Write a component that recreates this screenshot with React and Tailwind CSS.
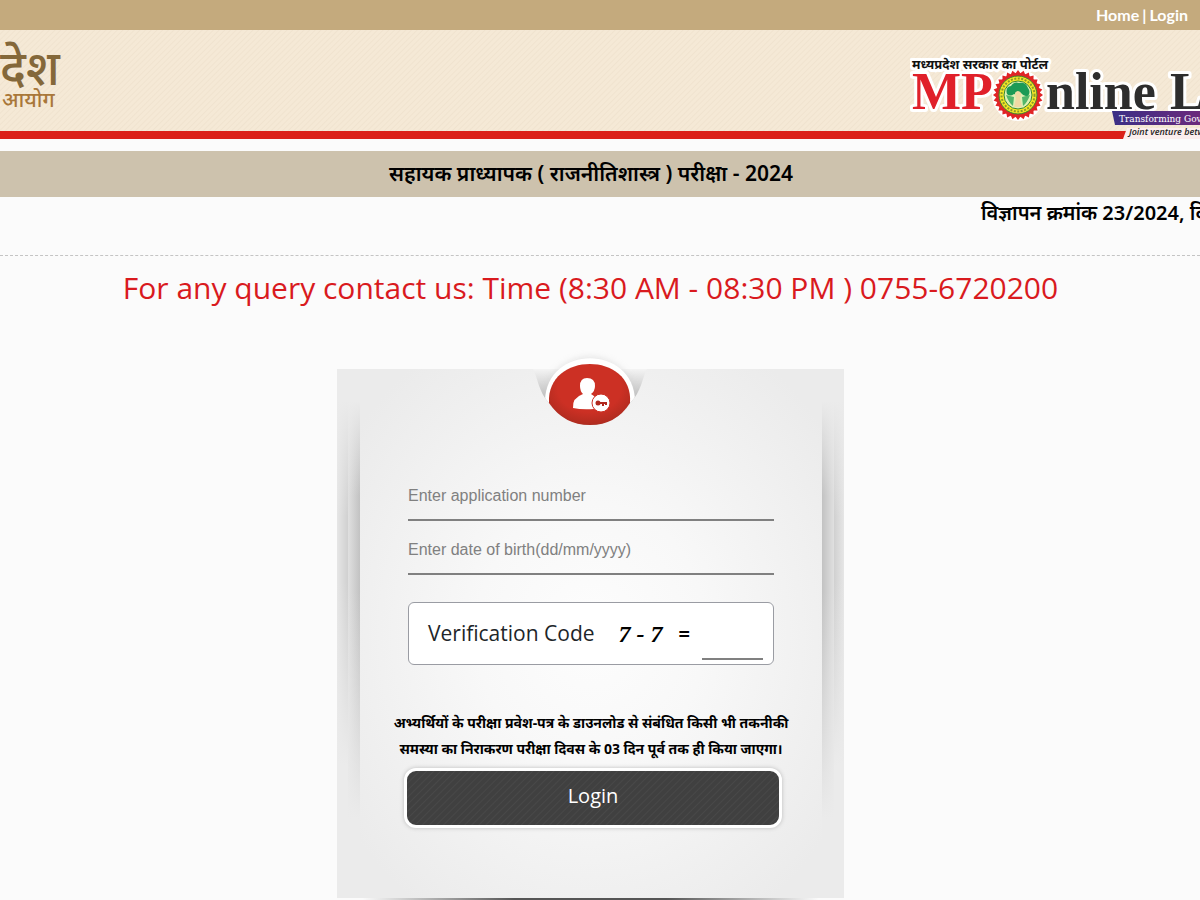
import { useState } from 'react';

const GEAR_TEETH = Array.from({ length: 28 }, (_, i) => (i * 360) / 28);

function TopBar() {
  return (
    <nav className="flex h-[30px] items-center justify-end gap-[3px] bg-[#c4aa7d] pr-3 font-['Lato',sans-serif] text-base font-bold text-white">
      <a href="#home">Home</a>
      <span>|</span>
      <a href="#login">Login</a>
    </nav>
  );
}

function PortalLogo() {
  return (
    <svg viewBox="0 0 290 88" className="h-[88px] w-[290px] shrink-0" role="img" aria-label="MPOnline Limited">
      <defs>
        <linearGradient id="ribbon" x1="0" y1="0" x2="1" y2="0">
          <stop offset="0" stopColor="#3b2f86" />
          <stop offset="1" stopColor="#6b2a7c" />
        </linearGradient>
      </defs>
      {/* Strapline plate that cuts into the red rule */}
      <path d="M217 77 H290 V88 H213 Z" fill="#fbeeee" />
      <g stroke="#ffffff" strokeWidth="6" strokeLinejoin="round" paintOrder="stroke">
        <text x="2" y="58" fontSize="52" fontWeight="700" fill="#e0202a" fontFamily="'Liberation Serif', serif">
          MP
        </text>
        <text x="136" y="58" fontSize="52" fontWeight="700" fill="#2d2d2d" fontFamily="'Liberation Serif', serif">
          nline
        </text>
        <text x="260" y="58" fontSize="52" fontWeight="700" fill="#2d2d2d" fontFamily="'Liberation Serif', serif">
          L
        </text>
        <text x="2" y="18" fontSize="13" fontWeight="700" fill="#111111" fontFamily="'Noto Sans', 'Noto Sans Devanagari', sans-serif">
          मध्यप्रदेश सरकार का पोर्टल
        </text>
      </g>
      <g transform="translate(108 44)">
        <circle r="26" fill="#ffffff" />
        {GEAR_TEETH.map(angle => (
          <path key={angle} d="M-3 -21 L0 -25 L3 -21 Z" fill="#e02426" transform={`rotate(${angle})`} />
        ))}
        <circle r="22" fill="#e02426" />
        <circle r="19" fill="#f5e626" stroke="#37872f" strokeWidth="1" />
        <circle r="16.5" fill="none" stroke="#8a9a2a" strokeWidth="2" strokeDasharray="2 1.5" />
        <circle r="14" fill="#dff0b5" stroke="#37872f" strokeWidth="1" />
        <path d="M-11 -1 Q-13 -8 -7 -9 Q-4 -14 1 -12 Q8 -13 10 -7 Q13 -3 10 1 Q6 2 3 -2 Q0 1 -4 -1 Q-8 2 -11 -1 Z" fill="#1c9a55" />
        <path d="M-12 0 Q-9 8 -5 11 L-4 2 Z M12 0 Q9 8 5 11 L4 2 Z" fill="#52b66b" />
        <path d="M-4 12 L-2 3 Q-5 -3 0 -4 Q5 -3 2 3 L4 12 Z" fill="#f0d9a4" />
      </g>
      <path d="M202 60 H290 V74 H205 Z" fill="url(#ribbon)" />
      <text x="209" y="71" fontSize="9" fill="#ffffff" fontFamily="'DejaVu Serif', serif">
        Transforming Gov
      </text>
      <text x="219" y="84" fontSize="9" fontStyle="italic" fontWeight="600" fill="#222222" fontFamily="'Open Sans', sans-serif">
        Joint venture betw
      </text>
    </svg>
  );
}

function Banner() {
  return (
    <header className="flex h-[109px] items-start justify-between overflow-hidden bg-[#f3e6d2] bg-[linear-gradient(to_top,#db2018_8px,transparent_8px),repeating-linear-gradient(135deg,#f5e9d6_0px,#f5e9d6_2px,#f0e3cf_3px,#f5e9d6_4px)]">
      <div className="pt-[14px] font-['Noto_Sans','Noto_Sans_Devanagari',sans-serif] font-medium">
        <div className="text-5xl leading-[46px] text-[#84683a]">देश</div>
        <div className="pl-[2px] text-[21px] leading-[18px] text-[#a9773a]">आयोग</div>
      </div>
      <div className="self-end">
        <PortalLogo />
      </div>
    </header>
  );
}

function UserKeyBadge() {
  return (
    <svg viewBox="1 0 140 90" className="absolute -top-6 left-1/2 h-[90px] w-[140px] -translate-x-1/2" aria-hidden="true">
      <defs>
        <linearGradient id="notchShade" x1="0" y1="0" x2="0" y2="1">
          <stop offset="0" stopColor="#f4f4f4" />
          <stop offset="0.6" stopColor="#b4b4b4" />
        </linearGradient>
        <radialGradient id="badgeFill" cx="0.5" cy="0.4" r="0.65">
          <stop offset="0.6" stopColor="#cc3024" />
          <stop offset="1" stopColor="#a82a1e" />
        </radialGradient>
        <filter id="badgeBlur">
          <feGaussianBlur stdDeviation="3" />
        </filter>
        <clipPath id="notchClip">
          <path d="M0 0 H140 V24 H127 C122 33 122 46 110 58 Q96 79 70 80 Q44 79 29 58 C18 46 18 33 13 24 H0 Z" />
        </clipPath>
      </defs>
      <path d="M13 24 H127 C122 33 122 46 110 58 Q96 79 70 80 Q44 79 29 58 C18 46 18 33 13 24 Z" fill="url(#notchShade)" />
      <g clipPath="url(#notchClip)">
        <ellipse cx="70" cy="54" rx="45" ry="42" fill="#cccccc" opacity="0.5" filter="url(#badgeBlur)" />
        <path d="M25 56 C26 -1 114 -1 115 56 L110 64 H29 Z" fill="#ffffff" />
      </g>
      <path d="M29 58 C26 6 114 6 110 58 Q96 80 70 80 Q44 80 29 58 Z" fill="url(#badgeFill)" />
      <path d="M53 63 Q52 53 63 49 Q60 46 60 41 Q60 33 67 33 Q75 33 75 41 Q75 46 71 49 Q75 51 76 54 L74 64 Q62 65 53 63 Z" fill="#ffffff" />
      <circle cx="81" cy="58" r="9" fill="#ffffff" stroke="#cc3024" strokeWidth="1" />
      <circle cx="78" cy="58" r="2.5" fill="#b0281e" />
      <path d="M79 57 H87 V60 H85 V59 H84 V61 H82 V59 H79 Z" fill="#b0281e" />
    </svg>
  );
}

function LoginCard() {
  const [form, setForm] = useState({ applicationNo: '', dob: '', code: '' });
  const update = e => setForm({ ...form, [e.target.name]: e.target.value });

  return (
    <section className="mx-auto mt-[57px] w-[507px] max-w-full">
      <div className="relative flex">
        {/* Stacked paper edges, left */}
        <div className="w-[11px] shrink-0 bg-[linear-gradient(to_bottom,#ebebeb_6%,transparent_28%,transparent_40%,#ebebeb_75%),linear-gradient(to_right,#e6e6e6,#d0d0d0)]" />
        <div className="w-3 shrink-0 bg-[linear-gradient(to_bottom,#ebebeb_6%,transparent_24%,transparent_42%,#ebebeb_85%),linear-gradient(to_right,#e0e0e0,#c2c2c2)]" />
        <form
          className="flex min-w-0 flex-1 flex-col bg-[radial-gradient(ellipse_at_center,#fdfdfd_0%,#f8f8f8_35%,#ebebeb_90%)] px-12 pt-[105px] pb-[70px] font-['Open_Sans',sans-serif]"
          onSubmit={e => e.preventDefault()}
        >
          <input
            name="applicationNo"
            aria-label="Application number"
            placeholder="Enter application number"
            value={form.applicationNo}
            onChange={update}
            className="h-[47px] border-b-2 border-[#808080] bg-transparent pb-[2px] font-['Liberation_Sans',sans-serif] text-base text-gray-800 outline-none placeholder:text-[#808080]"
          />
          <input
            name="dob"
            aria-label="Date of birth"
            placeholder="Enter date of birth(dd/mm/yyyy)"
            value={form.dob}
            onChange={update}
            className="mt-[7px] h-[47px] border-b-2 border-[#808080] bg-transparent pb-[2px] font-['Liberation_Sans',sans-serif] text-base text-gray-800 outline-none placeholder:text-[#808080]"
          />
          <div className="mt-[27px] flex h-[63px] items-center rounded-md border border-[#9a9ca3] bg-white pr-[10px] pl-[19px]">
            <label htmlFor="code" className="text-[21px] text-[#212529]">Verification Code</label>
            <span className="ml-auto font-['Liberation_Serif',serif] text-2xl font-bold text-black italic">7 - 7</span>
            <span className="mr-3 ml-4 text-xl font-bold text-black">=</span>
            <input
              id="code"
              name="code"
              value={form.code}
              onChange={update}
              className="mb-1 h-8 w-[61px] self-end border-b-2 border-[#808080] bg-transparent text-center outline-none"
            />
          </div>
          <p className="-mx-5 mt-[45px] text-center font-['Noto_Sans','Noto_Sans_Devanagari',sans-serif] text-sm leading-[26px] font-bold text-black">
            <span className="block whitespace-nowrap">अभ्यर्थियों के परीक्षा प्रवेश-पत्र के डाउनलोड से संबंधित किसी भी तकनीकी</span>
            <span className="block whitespace-nowrap">समस्या का निराकरण परीक्षा दिवस के 03 दिन पूर्व तक ही किया जाएगा।</span>
          </p>
          <button
            type="submit"
            className="-mr-2 -ml-1 mt-[6px] h-[60px] rounded-xl border-[3px] border-white bg-[#424242] bg-[repeating-linear-gradient(135deg,#404040_0px,#404040_3px,#484848_4px,#404040_5px)] pb-1 text-xl text-white shadow-[0_0_4px_#bbbbbb]"
          >
            Login
          </button>
        </form>
        {/* Stacked paper edges, right */}
        <div className="w-3 shrink-0 bg-[linear-gradient(to_bottom,#ebebeb_6%,transparent_24%,transparent_42%,#ebebeb_85%),linear-gradient(to_left,#e0e0e0,#c2c2c2)]" />
        <div className="w-[10px] shrink-0 bg-[linear-gradient(to_bottom,#ebebeb_6%,transparent_28%,transparent_40%,#ebebeb_75%),linear-gradient(to_left,#e6e6e6,#d0d0d0)]" />
        <UserKeyBadge />
      </div>
      <div className="h-[3px] bg-[linear-gradient(to_right,transparent_5%,#555555_35%,#555555_65%,transparent_95%)]" />
    </section>
  );
}

function App() {
  return (
    <div className="min-h-screen overflow-hidden bg-[#fbfbfb] font-['Open_Sans',sans-serif]">
      <TopBar />
      <Banner />
      <h1 className="mt-3 flex h-[46px] items-center justify-center bg-[#cdc2ad] pr-[18px] font-['Noto_Sans','Noto_Sans_Devanagari',sans-serif] text-[21px] font-semibold text-black">
        सहायक प्राध्यापक ( राजनीतिशास्त्र ) परीक्षा - 2024
      </h1>
      <div className="flex h-[59px] justify-end overflow-hidden border-b border-dashed border-[#c4c4c4] font-['Noto_Sans','Noto_Sans_Devanagari',sans-serif] text-xl leading-8 font-semibold text-black">
        <div className="w-[219px] whitespace-nowrap">विज्ञापन क्रमांक 23/2024, दि</div>
      </div>
      <main className="pr-[19px]">
        <p className="pt-[10px] pb-[2px] text-center text-[30px] leading-[44px] text-[#d91a1e]">
          For any query contact us: Time (8:30 AM - 08:30 PM ) 0755-6720200
        </p>
        <LoginCard />
      </main>
    </div>
  );
}

export default App;
